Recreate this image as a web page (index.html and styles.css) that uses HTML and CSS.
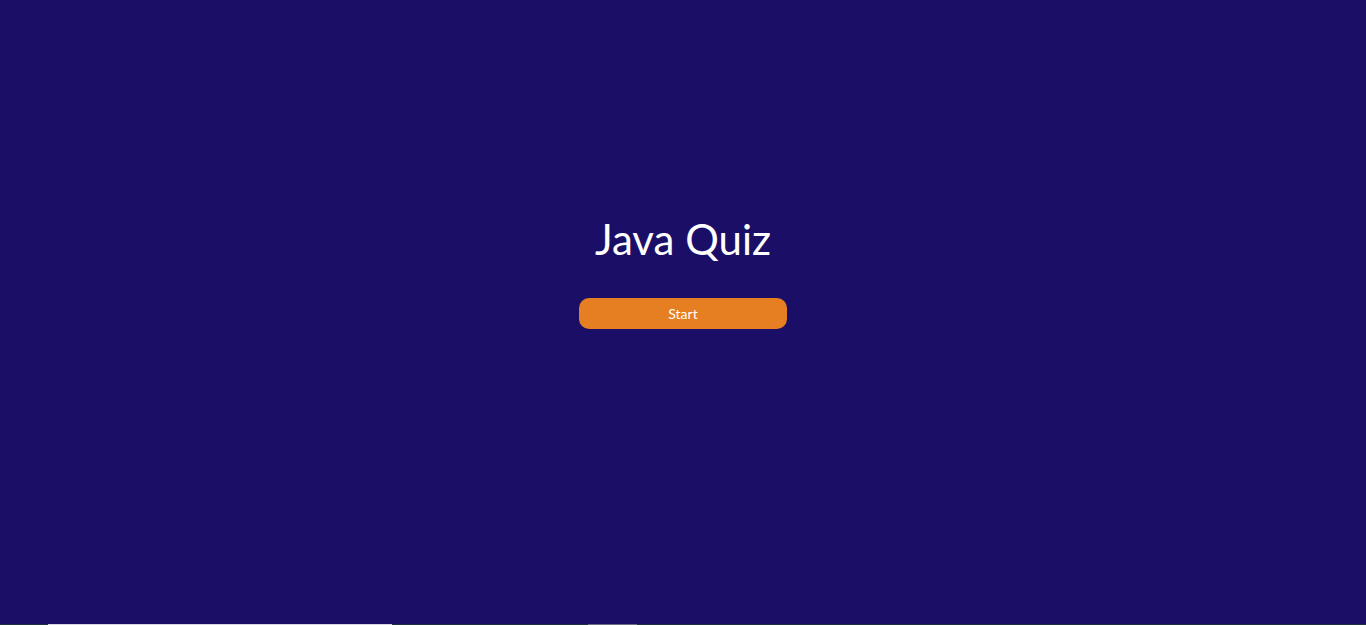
FILE: index.html
```html
<!DOCTYPE html>
<html>
<head>
<meta charset="utf-8">
<link rel="stylesheet" href="styles.css">
</head>
<body>
<main class="quiz">
  <h1 class="title">Java Quiz</h1>
  <button class="start">Start</button>
</main>
<div class="strip">
  <span class="seg dark1"></span>
  <span class="seg light"></span>
  <span class="seg dark2"></span>
  <span class="seg grey"></span>
  <span class="seg dark3"></span>
</div>
</body>
</html>
```
FILE: styles.css
```css
html, body {
  margin: 0;
  padding: 0;
  height: 100%;
}
body {
  background: #1b0e67;
  font-family: Lato, "Open Sans", sans-serif;
  display: flex;
  flex-direction: column;
  overflow: hidden;
}
.quiz {
  flex: 1;
  display: flex;
  flex-direction: column;
  align-items: center;
  padding-top: 209px;
}
.title {
  margin: 0;
  font-weight: 400;
  font-size: 42px;
  line-height: 60px;
  color: #ffffff;
}
.start {
  margin-top: 29px;
  width: 208px;
  height: 31px;
  border: none;
  border-radius: 10px;
  background: #e67e22;
  color: #ffffff;
  font-family: Lato, sans-serif;
  font-size: 14px;
  padding: 0;
  cursor: pointer;
}
.strip {
  height: 1px;
  display: flex;
}
.seg { display: block; height: 1px; }
.dark1 { width: 48px; background: #1f3040; }
.light { width: 344px; background: #d8d6e0; }
.dark2 { width: 196px; background: #1f3040; }
.grey { width: 49px; background: #6b6e80; }
.dark3 { flex: 1; background: #1f3040; }
```
